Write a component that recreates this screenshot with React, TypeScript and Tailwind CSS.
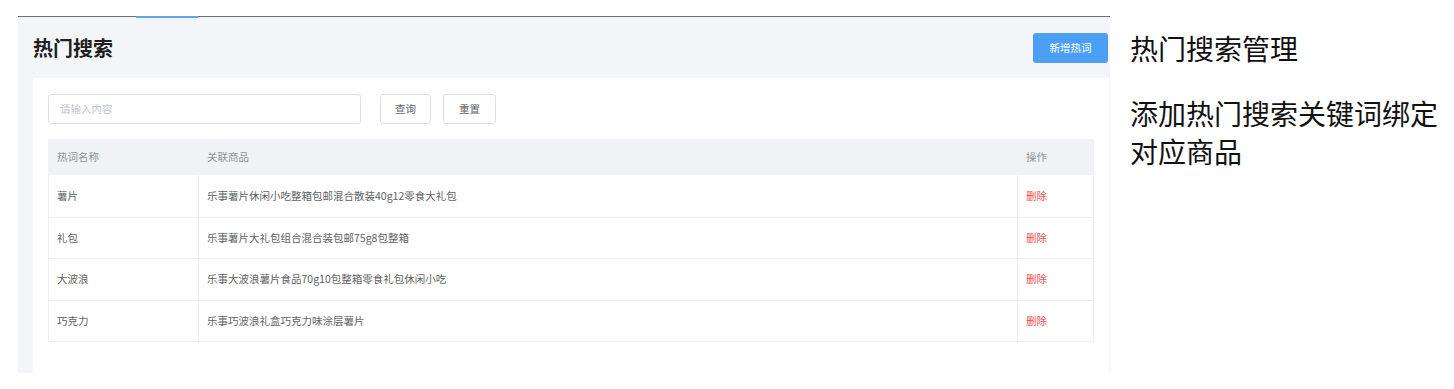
const rows = [
  { name: "薯片", goods: "乐事薯片休闲小吃整箱包邮混合散装40g12零食大礼包" },
  { name: "礼包", goods: "乐事薯片大礼包组合混合装包邮75g8包整箱" },
  { name: "大波浪", goods: "乐事大波浪薯片食品70g10包整箱零食礼包休闲小吃" },
  { name: "巧克力", goods: "乐事巧波浪礼盒巧克力味涂层薯片" },
];

const font = { fontFamily: '"Noto Sans CJK SC", "Noto Sans", sans-serif' };

export default function App() {
  return (
    <div className="flex w-[1454px] h-[389px] bg-white" style={font}>
      <div className="w-[1110px] pl-[18px] pt-[16px] shrink-0">
        <div className="relative h-px bg-[#6f7072]">
          <div className="absolute left-[118px] top-0 h-[2px] w-[62px] bg-[#5ca8f0]" />
        </div>
        <div className="bg-[#f3f5f8] pl-[15px] pr-px">
          <div className="flex h-[61px] items-center justify-between">
            <h1 className="text-[20px] font-bold text-[#1f1f1f] tracking-[0px]">热门搜索</h1>
            <button className="mr-px h-[30px] w-[75px] rounded-[3px] bg-[#4d9ff4] text-[10.5px] text-white">
              新增热词
            </button>
          </div>
          <div className="bg-white px-[15px] pt-[16px] pb-[31px]">
            <div className="flex items-center">
              <div className="flex h-[30px] w-[313px] items-center rounded-[3px] border border-[#dcdfe6] px-[11px] text-[10.5px] text-[#c0c4cc]">
                请输入内容
              </div>
              <button className="ml-[19px] h-[30px] w-[51px] rounded-[3px] border border-[#dcdfe6] text-[10.5px] text-[#606266]">
                查询
              </button>
              <button className="ml-[12px] h-[30px] w-[53px] rounded-[3px] border border-[#dcdfe6] text-[10.5px] text-[#606266]">
                重置
              </button>
            </div>
            <div className="mt-[15px] border-b border-[#ebeef5] text-[10.5px]">
              <div className="flex h-[36px] items-center bg-[#f0f2f6] text-[#909399]">
                <div className="w-[151px] pl-[9px]">热词名称</div>
                <div className="flex-1 pl-[8px]">关联商品</div>
                <div className="w-[76px] pl-[8px]">操作</div>
              </div>
              {rows.map((r, i) => (
                <div
                  key={r.name}
                  className={`flex h-[41.5px] border-l border-[#ebeef5] text-[#606266] ${i > 0 ? "border-t" : ""}`}
                >
                  <div className="flex w-[150px] items-center border-r border-[#ebeef5] pl-[8px]">{r.name}</div>
                  <div className="flex flex-1 items-center border-r border-[#ebeef5] pl-[8px]">{r.goods}</div>
                  <div className="flex w-[76px] items-center border-r border-[#ebeef5] pl-[8px] text-[#f5504f]">删除</div>
                </div>
              ))}
            </div>
          </div>
        </div>
      </div>
      <div className="ml-[20px] pt-[29px] text-[28px] leading-[38px] text-[#111]">
        <div>热门搜索管理</div>
        <div className="mt-[27px] w-[320px]">添加热门搜索关键词绑定对应商品</div>
      </div>
    </div>
  );
}
